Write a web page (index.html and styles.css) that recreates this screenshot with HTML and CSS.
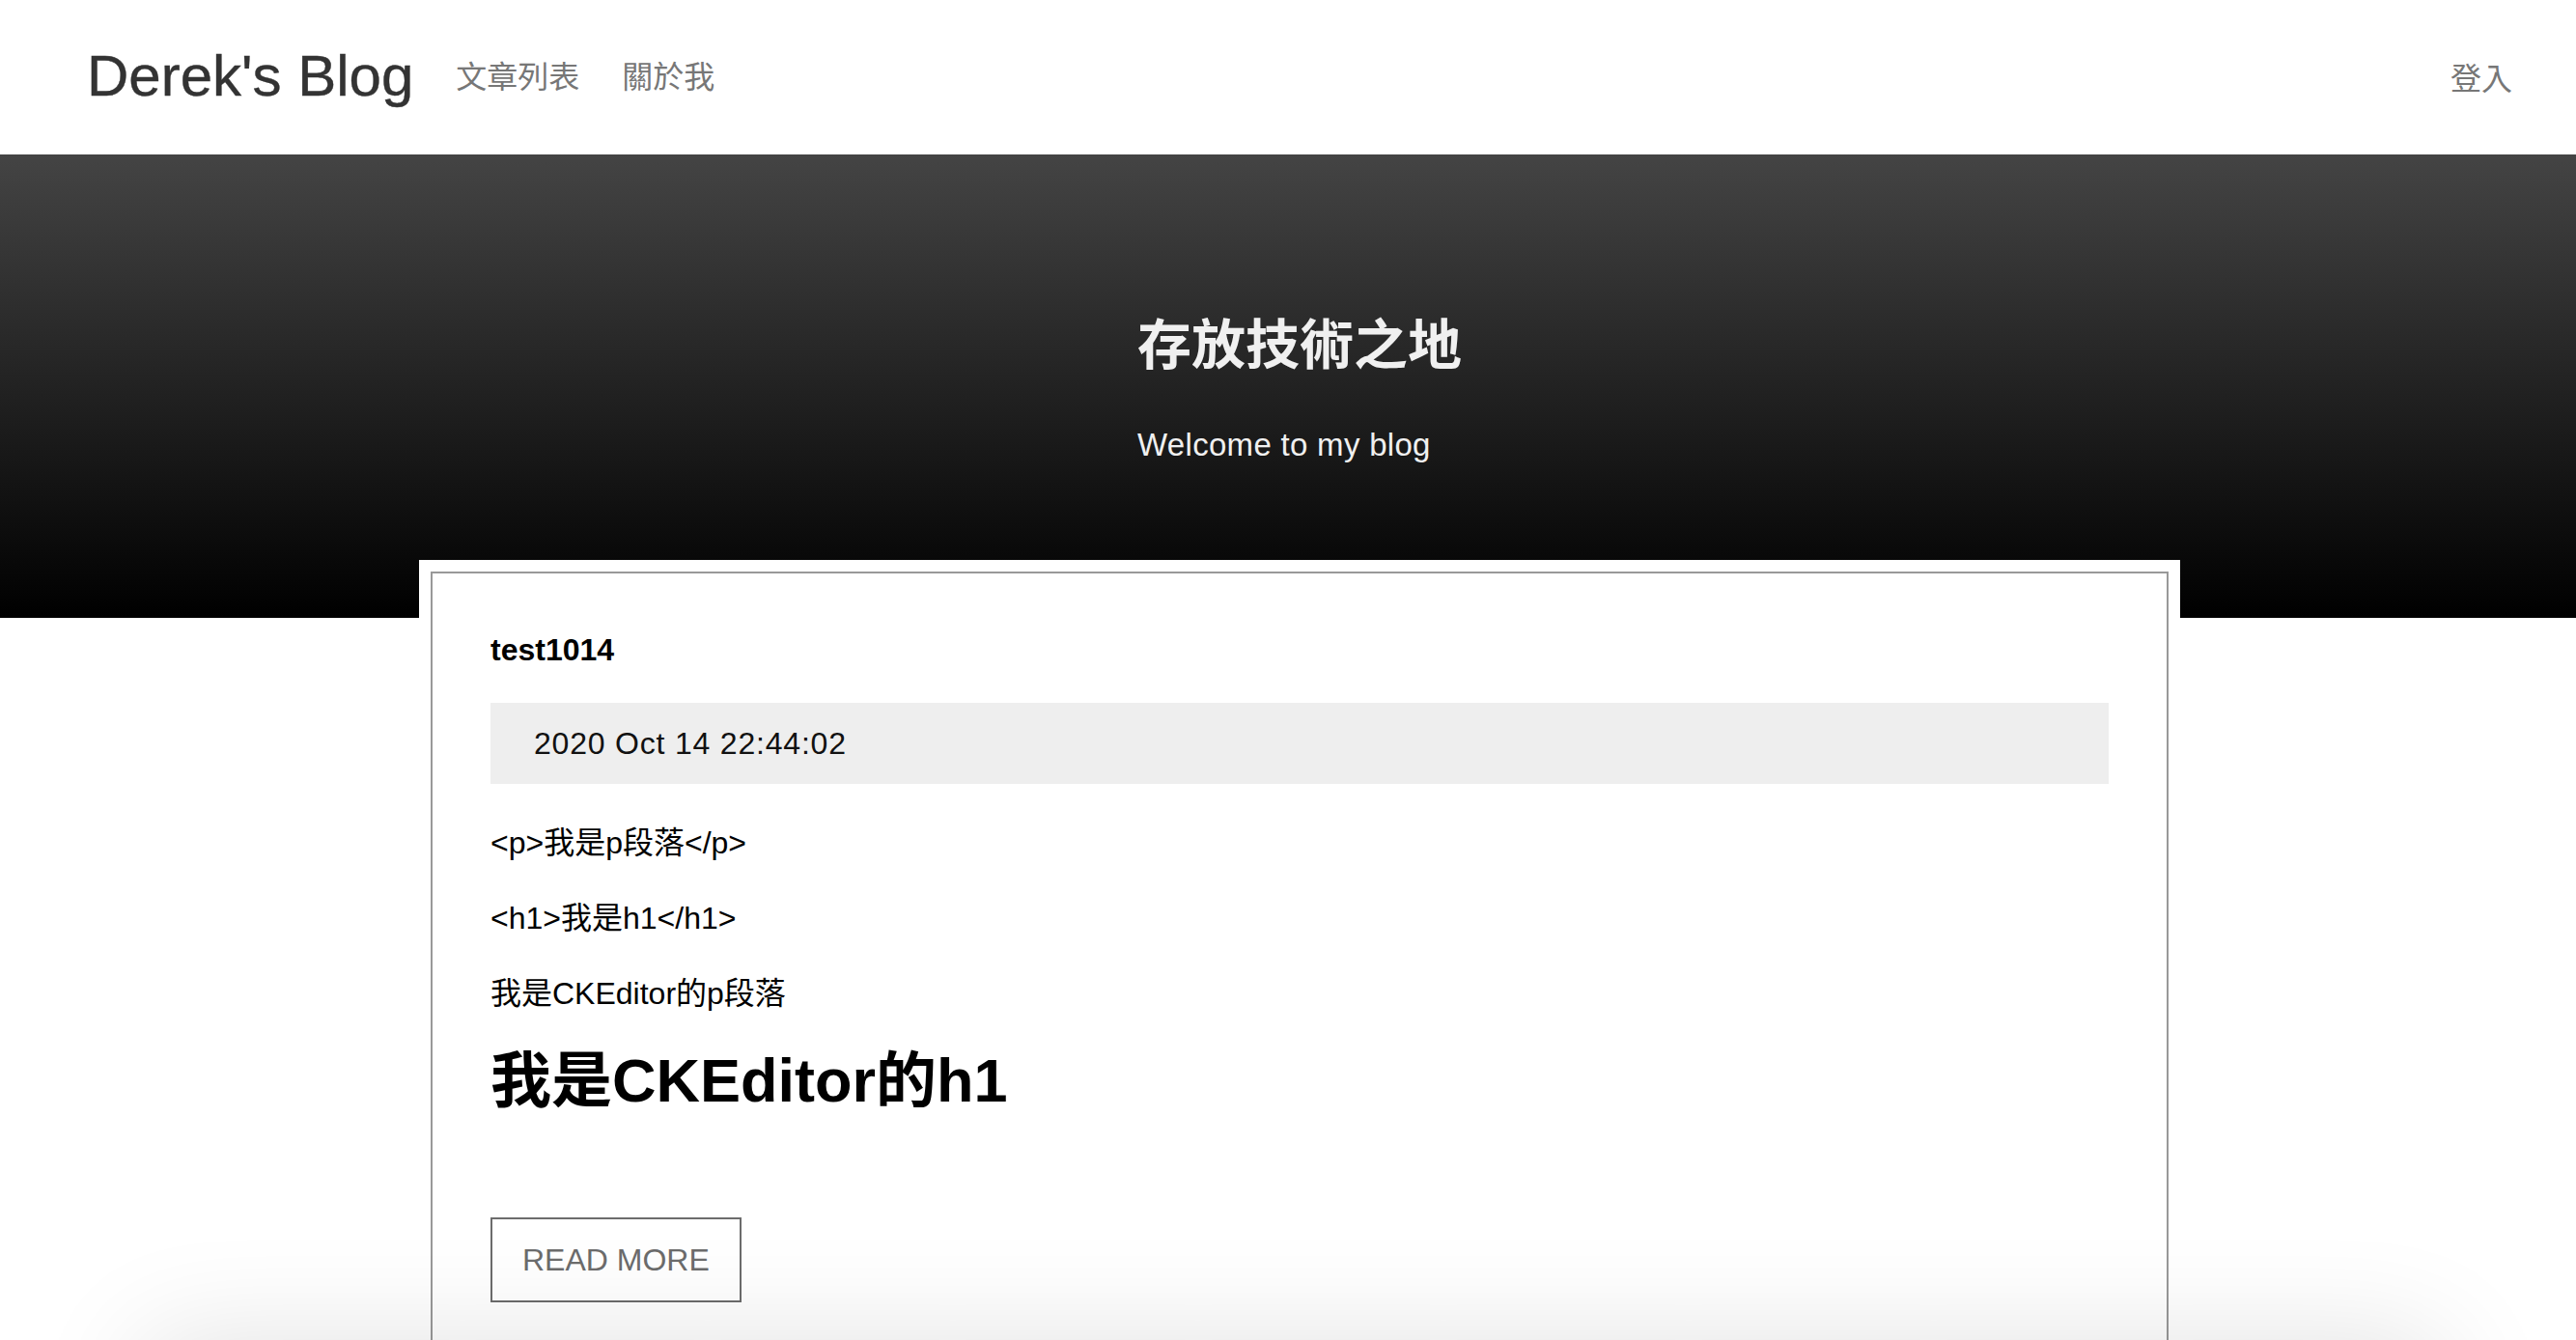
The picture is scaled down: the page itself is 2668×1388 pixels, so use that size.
FILE: index.html
```html
<!DOCTYPE html>
<html lang="zh-Hant">
<head>
<meta charset="utf-8">
<title>Derek's Blog</title>
<link rel="stylesheet" href="styles.css">
</head>
<body>
<header class="navbar">
  <div class="nav-left">
    <a class="brand" href="#">Derek's Blog</a>
    <ul class="nav-links">
      <li><a href="#">文章列表</a></li>
      <li><a href="#">關於我</a></li>
    </ul>
  </div>
  <a class="login" href="#">登入</a>
</header>

<section class="hero">
  <div class="hero-inner">
    <h1 class="hero-title">存放技術之地</h1>
    <p class="hero-sub">Welcome to my blog</p>
  </div>
</section>

<main class="main">
  <div class="card-wrap">
    <article class="card">
      <h2 class="post-title">test1014</h2>
      <div class="post-date">2020 Oct 14 22:44:02</div>
      <div class="post-body">
        <p>&lt;p&gt;我是p段落&lt;/p&gt;</p>
        <p>&lt;h1&gt;我是h1&lt;/h1&gt;</p>
        <p>我是CKEditor的p段落</p>
        <h1>我是CKEditor的h1</h1>
      </div>
      <a class="read-more" href="#">READ MORE</a>
    </article>
  </div>
</main>

<div class="bottom-shade"></div>
</body>
</html>
```

FILE: styles.css
```css
* { box-sizing: border-box; }

html, body {
  margin: 0;
  padding: 0;
  background: #fff;
}

body {
  font-family: "Liberation Sans", "Noto Sans CJK TC", sans-serif;
  font-size: 32px;
  color: #111;
  overflow: hidden;
  height: 1388px;
}

a { text-decoration: none; }

/* NAVBAR */
.navbar {
  height: 160px;
  display: flex;
  align-items: center;
  justify-content: space-between;
  padding: 0 66px 0 90px;
  background: #fff;
}

.nav-left {
  display: flex;
  align-items: center;
}

.brand {
  font-size: 60px;
  color: #333;
  line-height: 1;
  margin-right: 44px;
  padding-bottom: 2px;
  -webkit-text-stroke: 0.4px #333;
}

.nav-links {
  list-style: none;
  margin: 0;
  padding: 0;
  display: flex;
  gap: 44px;
}

.nav-links a,
.login {
  font-family: "Noto Sans CJK TC", sans-serif;
  font-size: 32px;
  color: #777;
  line-height: 1;
}

.login {
  margin-top: -2px;
}

/* HERO */
.hero {
  height: 480px;
  background: linear-gradient(to bottom, #444 0%, #000 100%);
  padding-left: 24px;
  display: flex;
  justify-content: center;
  align-items: flex-start;
}

.hero-inner {
  display: flex;
  flex-direction: column;
  align-items: flex-start;
  color: #f0f0f0;
  padding-top: 162px;
}

.hero-title {
  margin: 0;
  font-family: "Noto Sans CJK TC", sans-serif;
  font-size: 56px;
  font-weight: 700;
  line-height: 62px;
}

.hero-sub {
  margin: 57px 0 0;
  font-size: 33px;
  line-height: 40px;
  letter-spacing: 0.3px;
}

/* MAIN */
.main {
  padding-left: 24px;
}

.card-wrap {
  width: 1824px;
  margin: -60px auto 0;
  background: #fff;
  padding: 12px 12px 0;
}

.card {
  border: 2px solid #999;
  padding: 60px 60px 80px;
  min-height: 900px;
}

.post-title {
  margin: 0 0 36px;
  font-size: 32px;
  font-weight: 700;
  line-height: 38px;
  color: #000;
}

.post-date {
  background: #eee;
  height: 84px;
  line-height: 84px;
  padding: 0 45px;
  font-size: 32px;
  letter-spacing: 0.8px;
  color: #111;
}

.post-body {
  margin-top: 38px;
  margin-bottom: 107px;
}

.post-body p {
  margin: 0 0 32px;
  font-size: 32px;
  line-height: 46px;
  color: #000;
}

.post-body h1 {
  margin: 0;
  font-size: 63px;
  font-weight: 700;
  line-height: 70px;
  color: #000;
}

.read-more {
  display: inline-block;
  border: 2px solid #6c6c6c;
  color: #6c6c6c;
  font-size: 32px;
  line-height: 85px;
  height: 88px;
  padding: 0 31px;
}

/* soft shadow creeping up from an element below the fold */
.bottom-shade {
  position: fixed;
  left: 160px;
  right: 150px;
  top: 1400px;
  height: 300px;
  background: #eee;
  box-shadow: 0 0 120px 10px rgba(0, 0, 0, 0.12);
}
```
